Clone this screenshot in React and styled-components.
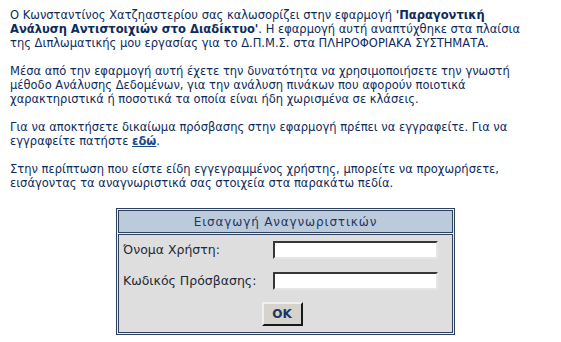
import React from "react";
import styled, { createGlobalStyle } from "styled-components";

const GlobalStyle = createGlobalStyle`
  html, body {
    margin: 0;
    padding: 0;
    background: #ffffff;
  }
  body {
    font-family: "DejaVu Sans", Verdana, sans-serif;
  }
`;

const Page = styled.div`
  padding: 8px 0 0 10px;
  color: #0d2b5b;
  font-size: 11.5px;
  line-height: 14px;
`;

const Paragraph = styled.p`
  margin: 0 0 14px 0;
  white-space: nowrap;
`;

const Strong = styled.b`
  color: #0d2b5b;
`;

const Link = styled.a`
  color: #1b4a8c;
  font-weight: bold;
  text-decoration: underline;
`;

const Panel = styled.div`
  box-sizing: border-box;
  width: 339px;
  margin: 18px auto 0;
  border: 1px solid #2d405d;
  padding: 1px;
  background: #eeeeee;
  display: flex;
  flex-direction: column;
  gap: 1px;
`;

const PanelHeader = styled.div`
  box-sizing: border-box;
  height: 23px;
  border: 1px solid #2d405d;
  background: #bccbdb;
  color: #1c3763;
  font-size: 12px;
  letter-spacing: 0.85px;
  display: flex;
  align-items: center;
  justify-content: center;
`;

const PanelBody = styled.div`
  box-sizing: border-box;
  border: 1px solid #2d405d;
  background: #dedede;
  padding: 6px 14px 6px 4px;
  display: grid;
  grid-template-columns: 150px 165px;
  row-gap: 13px;
  align-items: center;
`;

const Label = styled.label`
  color: #222a36;
  font-size: 12.5px;
  white-space: nowrap;
`;

const Field = styled.input`
  box-sizing: border-box;
  width: 165px;
  height: 18px;
  margin: 0;
  border: 2px inset #8a8a8a;
  border-right-color: #e6e6e6;
  border-bottom-color: #e6e6e6;
  background: #ffffff;
  font-size: 11px;
  padding: 0 2px;
`;

const ButtonRow = styled.div`
  grid-column: 1 / 3;
  display: flex;
  justify-content: center;
  margin-top: -1px;
`;

const Button = styled.button`
  box-sizing: border-box;
  width: 41px;
  height: 24px;
  margin-left: 3px;
  background: #d6d3cc;
  border: 2px outset #efefef;
  border-right-color: #6d6d6d;
  border-bottom-color: #6d6d6d;
  color: #1c3763;
  font-family: "DejaVu Sans", Verdana, sans-serif;
  font-size: 12px;
  font-weight: 600;
  padding: 0;
`;

export default function App() {
  return (
    <Page>
      <GlobalStyle />
      <Paragraph>
        Ο Κωνσταντίνος Χατζηαστερίου σας καλωσορίζει στην εφαρμογή{" "}
        <Strong>'Παραγοντική</Strong>
        <br />
        <Strong>Ανάλυση Αντιστοιχιών στο Διαδίκτυο'</Strong>. Η εφαρμογή αυτή
        αναπτύχθηκε στα πλαίσια
        <br />
        της Διπλωματικής μου εργασίας για το Δ.Π.Μ.Σ. στα ΠΛΗΡΟΦΟΡΙΑΚΑ
        ΣΥΣΤΗΜΑΤΑ.
      </Paragraph>
      <Paragraph>
        Μέσα από την εφαρμογή αυτή έχετε την δυνατότητα να χρησιμοποιήσετε την
        γνωστή
        <br />
        μέθοδο Ανάλυσης Δεδομένων, για την ανάλυση πινάκων που αφορούν ποιοτικά
        <br />
        χαρακτηριστικά ή ποσοτικά τα οποία είναι ήδη χωρισμένα σε κλάσεις.
      </Paragraph>
      <Paragraph>
        Για να αποκτήσετε δικαίωμα πρόσβασης στην εφαρμογή πρέπει να
        εγγραφείτε. Για να
        <br />
        εγγραφείτε πατήστε <Link href="#">εδώ</Link>.
      </Paragraph>
      <Paragraph>
        Στην περίπτωση που είστε είδη εγγεγραμμένος χρήστης, μπορείτε να
        προχωρήσετε,
        <br />
        εισάγοντας τα αναγνωριστικά σας στοιχεία στα παρακάτω πεδία.
      </Paragraph>

      <Panel>
        <PanelHeader>Εισαγωγή Αναγνωριστικών</PanelHeader>
        <PanelBody>
          <Label>Όνομα Χρήστη:</Label>
          <Field type="text" />
          <Label>Κωδικός Πρόσβασης:</Label>
          <Field type="password" />
          <ButtonRow>
            <Button type="submit">OK</Button>
          </ButtonRow>
        </PanelBody>
      </Panel>
    </Page>
  );
}
